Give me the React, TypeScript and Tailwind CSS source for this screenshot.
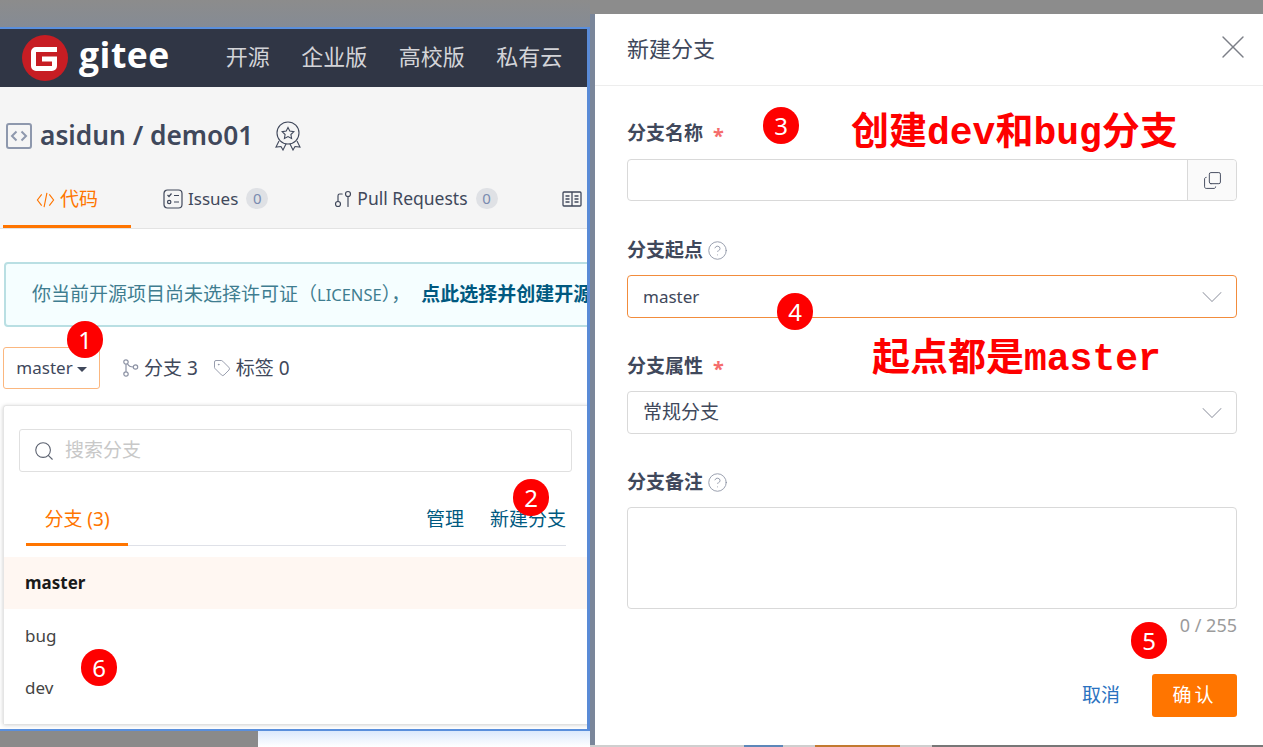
import { Copy, GitPullRequest, Search, Tag, X, ChevronDown, CircleHelp } from "lucide-react";

const font = "font-['Noto_Sans','Noto_Sans_CJK_SC',sans-serif]";

function Marker({ n, className }: { n: number; className: string }) {
  return (
    <div className={`absolute w-[36px] h-[37px] rounded-full bg-[#fe0000] text-white text-[24px] leading-[37px] text-center ${className}`}>
      {n}
    </div>
  );
}

function GiteeLogo() {
  return (
    <svg width="46" height="46" viewBox="0 0 46 46">
      <circle cx="23" cy="23" r="23" fill="#c71d23" />
      <path d="M35 14.5 H14 a2.5 2.5 0 0 0 -2.5 2.5 V31 a2.5 2.5 0 0 0 2.5 2.5 H30 a2.5 2.5 0 0 0 2.5 -2.5 V24 H20" fill="none" stroke="#fff" strokeWidth="5" />
    </svg>
  );
}

function Badge({ value }: { value: number }) {
  return (
    <span className="ml-[8px] w-[22px] h-[21px] rounded-full bg-[#dfe1e5] text-[#7a8bb0] text-[15px] leading-[21px] text-center">{value}</span>
  );
}

function Label({ text, required, help }: { text: string; required?: boolean; help?: boolean }) {
  return (
    <div className="h-[24px] flex items-center text-[#40485b] text-[19px] leading-[24px] font-bold">
      {text}
      {required && <span className="ml-[10px] pt-[5px] text-[#f56c6c] text-[20px]">*</span>}
      {help && <CircleHelp size={21} strokeWidth={1} className="ml-[4px] text-[#8c92a4]" />}
    </div>
  );
}

function SelectBox({ value, focused, size }: { value: string; focused?: boolean; size: string }) {
  return (
    <div className={`h-[43px] rounded-[4px] border flex items-center justify-between pl-[15px] pr-[6px] text-[#40485b] ${size} ${focused ? "border-[#f28c3c]" : "border-[#d9d9d9]"}`}>
      <span>{value}</span>
      <ChevronDown size={36} strokeWidth={0.7} className="text-[#a0a4ae]" />
    </div>
  );
}

export default function App() {
  return (
    <div className={`relative w-[1263px] h-[747px] overflow-hidden flex bg-[#8c8c8c] ${font}`}>
      {/* left: repository page */}
      <div className="w-[590px] flex flex-col shrink-0">
        <div className="h-[27px] bg-gradient-to-b from-[#8c8c8c] to-[#858b94]" />
        <div className="h-[704px] flex flex-col bg-white border-y-2 border-r-[3px] border-y-[#5a8fdc] border-r-[#5a8bd6] overflow-hidden">
          <div className="h-[58px] shrink-0 bg-[#303645] flex items-center pl-[22px]">
            <GiteeLogo />
            <span className="ml-[11px] text-white text-[35.5px] font-bold font-['Open_Sans'] leading-none -mt-[6px] tracking-[0.5px]">gitee</span>
            <div className="ml-[56px] -mt-[4px] flex gap-[31.5px] text-[#d3d4d8] text-[22px]">
              <span>开源</span>
              <span>企业版</span>
              <span>高校版</span>
              <span>私有云</span>
            </div>
          </div>

          <div className="h-[142px] shrink-0 bg-[#f5f5f5] border-b border-[#e3e3e3] flex flex-col">
            <div className="h-[93px] flex items-center pl-[6px] pt-[5px]">
              <svg width="26" height="26" viewBox="0 0 26 26" fill="none">
                <rect x="1" y="1" width="24" height="24" rx="2" stroke="#8e98ad" strokeWidth="2" />
                <path d="M10.5 8.5 L6 13 L10.5 17.5 M15.5 8.5 L20 13 L15.5 17.5" stroke="#8e98ad" strokeWidth="2" />
              </svg>
              <span className="ml-[8px] text-[#40485b] text-[26.3px] font-semibold">asidun / demo01</span>
              <svg className="ml-[22px]" width="26" height="30" viewBox="0 0 26 30" fill="none" stroke="#40485b" strokeWidth="1.1">
                <circle cx="13" cy="12" r="11" />
                <path d="M13 6.5 l1.8 3.6 4 .6 -2.9 2.8 .7 4 -3.6 -1.9 -3.6 1.9 .7 -4 -2.9 -2.8 4 -.6 z" />
                <path d="M4 20 L1 26 l5 -.5 2 3.5 3 -6 M22 20 l3 6 -5 -.5 -2 3.5 -3 -6" />
              </svg>
            </div>
            <div className="h-[48px] flex text-[#40485b]">
              <div className="ml-[3px] w-[128px] h-[48px] border-b-[3px] border-[#ff7500] flex items-center justify-center text-[#ff7500] text-[19px] pb-[6px] gap-[5px]">
                <svg width="19" height="20" viewBox="0 0 20 20" fill="none" stroke="#ff7500" strokeWidth="1.2">
                  <path d="M6 4 L1.5 10 L6 16 M14 4 L18.5 10 L14 16 M11.5 2.5 L8.5 17.5" />
                </svg>
                <span>代码</span>
              </div>
              <div className="ml-[32px] flex items-center pb-[11px] text-[17px]">
                <svg width="20" height="20" viewBox="0 0 20 20" fill="none" stroke="#40485b" strokeWidth="1.2">
                  <rect x="1" y="1" width="18" height="18" rx="3.5" />
                  <path d="M4.5 6 l1.5 1.5 2.5 -3 M11 6.5 h5 M11 13 h5" />
                  <circle cx="6.2" cy="13" r="1.7" />
                </svg>
                <span className="ml-[5px]">Issues</span>
                <Badge value={0} />
              </div>
              <div className="ml-[65px] flex items-center pb-[11px] text-[17.5px]">
                <GitPullRequest size={20} strokeWidth={1.4} className="-scale-x-100" />
                <span className="ml-[4px]">Pull Requests</span>
                <Badge value={0} />
              </div>
              <div className="ml-[64px] flex items-center pb-[11px]">
                <svg width="20" height="16" viewBox="0 0 20 16" fill="none" stroke="#40485b" strokeWidth="1.3">
                  <rect x="1" y="1" width="18" height="14" rx="1" />
                  <path d="M10 1 V15 M3.5 5 H7.5 M3.5 8 H7.5 M3.5 11 H7.5 M12.5 5 H16.5 M12.5 8 H16.5 M12.5 11 H16.5" />
                </svg>
              </div>
            </div>
          </div>

          <div className="relative flex-1 min-h-0 pt-[33px]">
            <div className="ml-[4px] -mr-[6px] h-[65px] rounded-[4px] border-2 border-[#b9dfe3] bg-[#f5feff] flex items-center pl-[26px] text-[#3f7d90] text-[19px] whitespace-nowrap overflow-hidden">
              <span>你当前开源项目尚未选择许可证（<span className="text-[16.5px]">LICENSE</span>），</span>
              <span className="ml-[11px] font-bold text-[#005980]">点此选择并创建开源</span>
            </div>

            <div className="mt-[20px] flex items-center">
              <div className="ml-[3px] w-[97px] h-[42px] rounded-[3px] border border-[#fbb77f] flex items-center justify-center text-[#40485b] text-[17px]">
                master
                <span className="ml-[4px] mt-[2px] border-x-[5px] border-t-[5px] border-x-transparent border-t-[#40485b]" />
              </div>
              <svg className="ml-[22px]" width="17" height="18" viewBox="0 0 17 18" fill="none" stroke="#8c92a4" strokeWidth="1.2">
                <circle cx="4" cy="3" r="2.2" />
                <circle cx="4" cy="15" r="2.2" />
                <circle cx="13.5" cy="8" r="2.2" />
                <path d="M4 5.2 V12.8 M5.5 4.8 C6.5 7 8.5 8 11.3 8" />
              </svg>
              <span className="ml-[5px] text-[#40485b] text-[19px]">分支 3</span>
              <Tag size={18} strokeWidth={1.2} className="ml-[15px] text-[#8c92a4]" />
              <span className="ml-[5px] text-[#40485b] text-[19px]">标签 0</span>
            </div>

            <div className="ml-[3px] -mr-[6px] mt-[16px] h-[319px] rounded-t-[3px] border-l border-t border-[#e5e5e5] shadow-[0_1px_4px_rgba(0,0,0,0.2)] flex flex-col">
              <div className="mt-[23px] ml-[15px] mr-[21px] h-[43px] rounded-[3px] border border-[#e0e0e0] flex items-center pl-[13px] text-[#c8c8c8] text-[19px]">
                <Search size={22} strokeWidth={1.2} className="text-[#5c6270]" />
                <span className="ml-[10px]">搜索分支</span>
              </div>
              <div className="mt-[20px] ml-[22px] mr-[27px] h-[54px] border-b border-[#dfe1e8] flex justify-between text-[19px]">
                <div className="w-[102px] h-[54px] border-b-[3px] border-[#ff7500] text-[#ff7500] text-center leading-[54px]">
                  分支 (3)
                </div>
                <div className="flex gap-[26px] text-[#005980] leading-[54px]">
                  <span>管理</span>
                  <span>新建分支</span>
                </div>
              </div>
              <div className="mt-[11px] h-[52px] bg-[#fff7f2] flex items-center pl-[21px] text-[#1a1a1a] text-[17px] font-bold">master</div>
              <div className="h-[53px] flex items-center pl-[21px] text-[#444444] text-[17px]">bug</div>
              <div className="h-[52px] flex items-center pl-[21px] text-[#444444] text-[17px]">dev</div>
            </div>
          </div>
        </div>
        <div className="flex-1 flex">
          <div className="w-[258px] bg-[#8a8a8a]" />
          <div className="flex-1 bg-gradient-to-b from-[#dbe9fc] to-white" />
        </div>
      </div>

      {/* right: new branch dialog */}
      <div className="flex-1 flex flex-col">
        <div className="h-[14px] bg-[#8c8c8c]" />
        <div className="flex h-[731px]">
          <div className="w-[5px] bg-[#7a869a]" />
          <div className="flex-1 bg-white flex flex-col">
            <div className="h-[72px] shrink-0 border-b border-[#ededed] flex items-center justify-between pl-[32px] pr-[10px] pb-[6px]">
              <span className="mt-[4px] text-[#40485b] text-[22px]">新建分支</span>
              <X size={40} strokeWidth={0.85} className="text-[#7c7f87]" />
            </div>

            <div className="pl-[32px] pr-[26px] pt-[35px] flex-1 flex flex-col">
              <Label text="分支名称" required />
              <div className="mt-[14px] h-[42px] rounded-[4px] border border-[#d9d9d9] flex justify-end">
                <div className="w-[49px] border-l border-[#d9d9d9] bg-[#fafafa] rounded-r-[4px] flex items-center justify-center">
                  <Copy size={19} strokeWidth={1.2} className="text-[#40485b] -scale-y-100" />
                </div>
              </div>

              <div className="mt-[37px]"><Label text="分支起点" help /></div>
              <div className="mt-[13px]"><SelectBox value="master" focused size="text-[17px]" /></div>

              <div className="mt-[36px]"><Label text="分支属性" required /></div>
              <div className="mt-[13px]"><SelectBox value="常规分支" size="text-[19px]" /></div>

              <div className="mt-[36px]"><Label text="分支备注" help /></div>
              <div className="mt-[13px] h-[102px] rounded-[4px] border border-[#d9d9d9]" />
              <div className="mt-[4px] text-right text-[#9b9b9b] text-[18px] leading-[24px]">0 / 255</div>

              <div className="mt-[37px] flex justify-end items-center">
                <span className="text-[#2a72c0] text-[19px]">取消</span>
                <div className="ml-[32px] w-[85px] h-[43px] rounded-[3px] bg-[#ff7500] text-white text-[19px] flex items-center justify-center tracking-[3px]">确认</div>
              </div>
            </div>
          </div>
        </div>
        {/* sliver of the page underneath the dialog */}
        <div className="flex-1 flex">
          <div className="w-[154px] bg-[#cfcfcf]" />
          <div className="w-[39px] bg-[#5d87b8]" />
          <div className="w-[32px] bg-[#cfcfcf]" />
          <div className="w-[85px] bg-[#c27a30]" />
          <div className="w-[32px] bg-[#cfcfcf]" />
          <div className="flex-1 bg-[#777777]" />
        </div>
      </div>

      {/* annotations drawn over the screenshot */}
      <Marker n={1} className="left-[67px] top-[321px]" />
      <Marker n={2} className="left-[513px] top-[479px]" />
      <Marker n={3} className="left-[763px] top-[107px]" />
      <Marker n={4} className="left-[777px] top-[293px]" />
      <Marker n={5} className="left-[1131px] top-[622px]" />
      <Marker n={6} className="left-[81px] top-[649px]" />
      <div className="absolute left-[851px] top-[109px] text-[#fe0000] text-[38px] leading-[50px] whitespace-nowrap font-['Liberation_Mono','Noto_Sans_CJK_SC',monospace] font-bold">
        创建dev和bug分支
      </div>
      <div className="absolute left-[872px] top-[335px] text-[#fe0000] text-[38px] leading-[50px] whitespace-nowrap font-['Liberation_Mono','Noto_Sans_CJK_SC',monospace] font-bold">
        起点都是master
      </div>
    </div>
  );
}
